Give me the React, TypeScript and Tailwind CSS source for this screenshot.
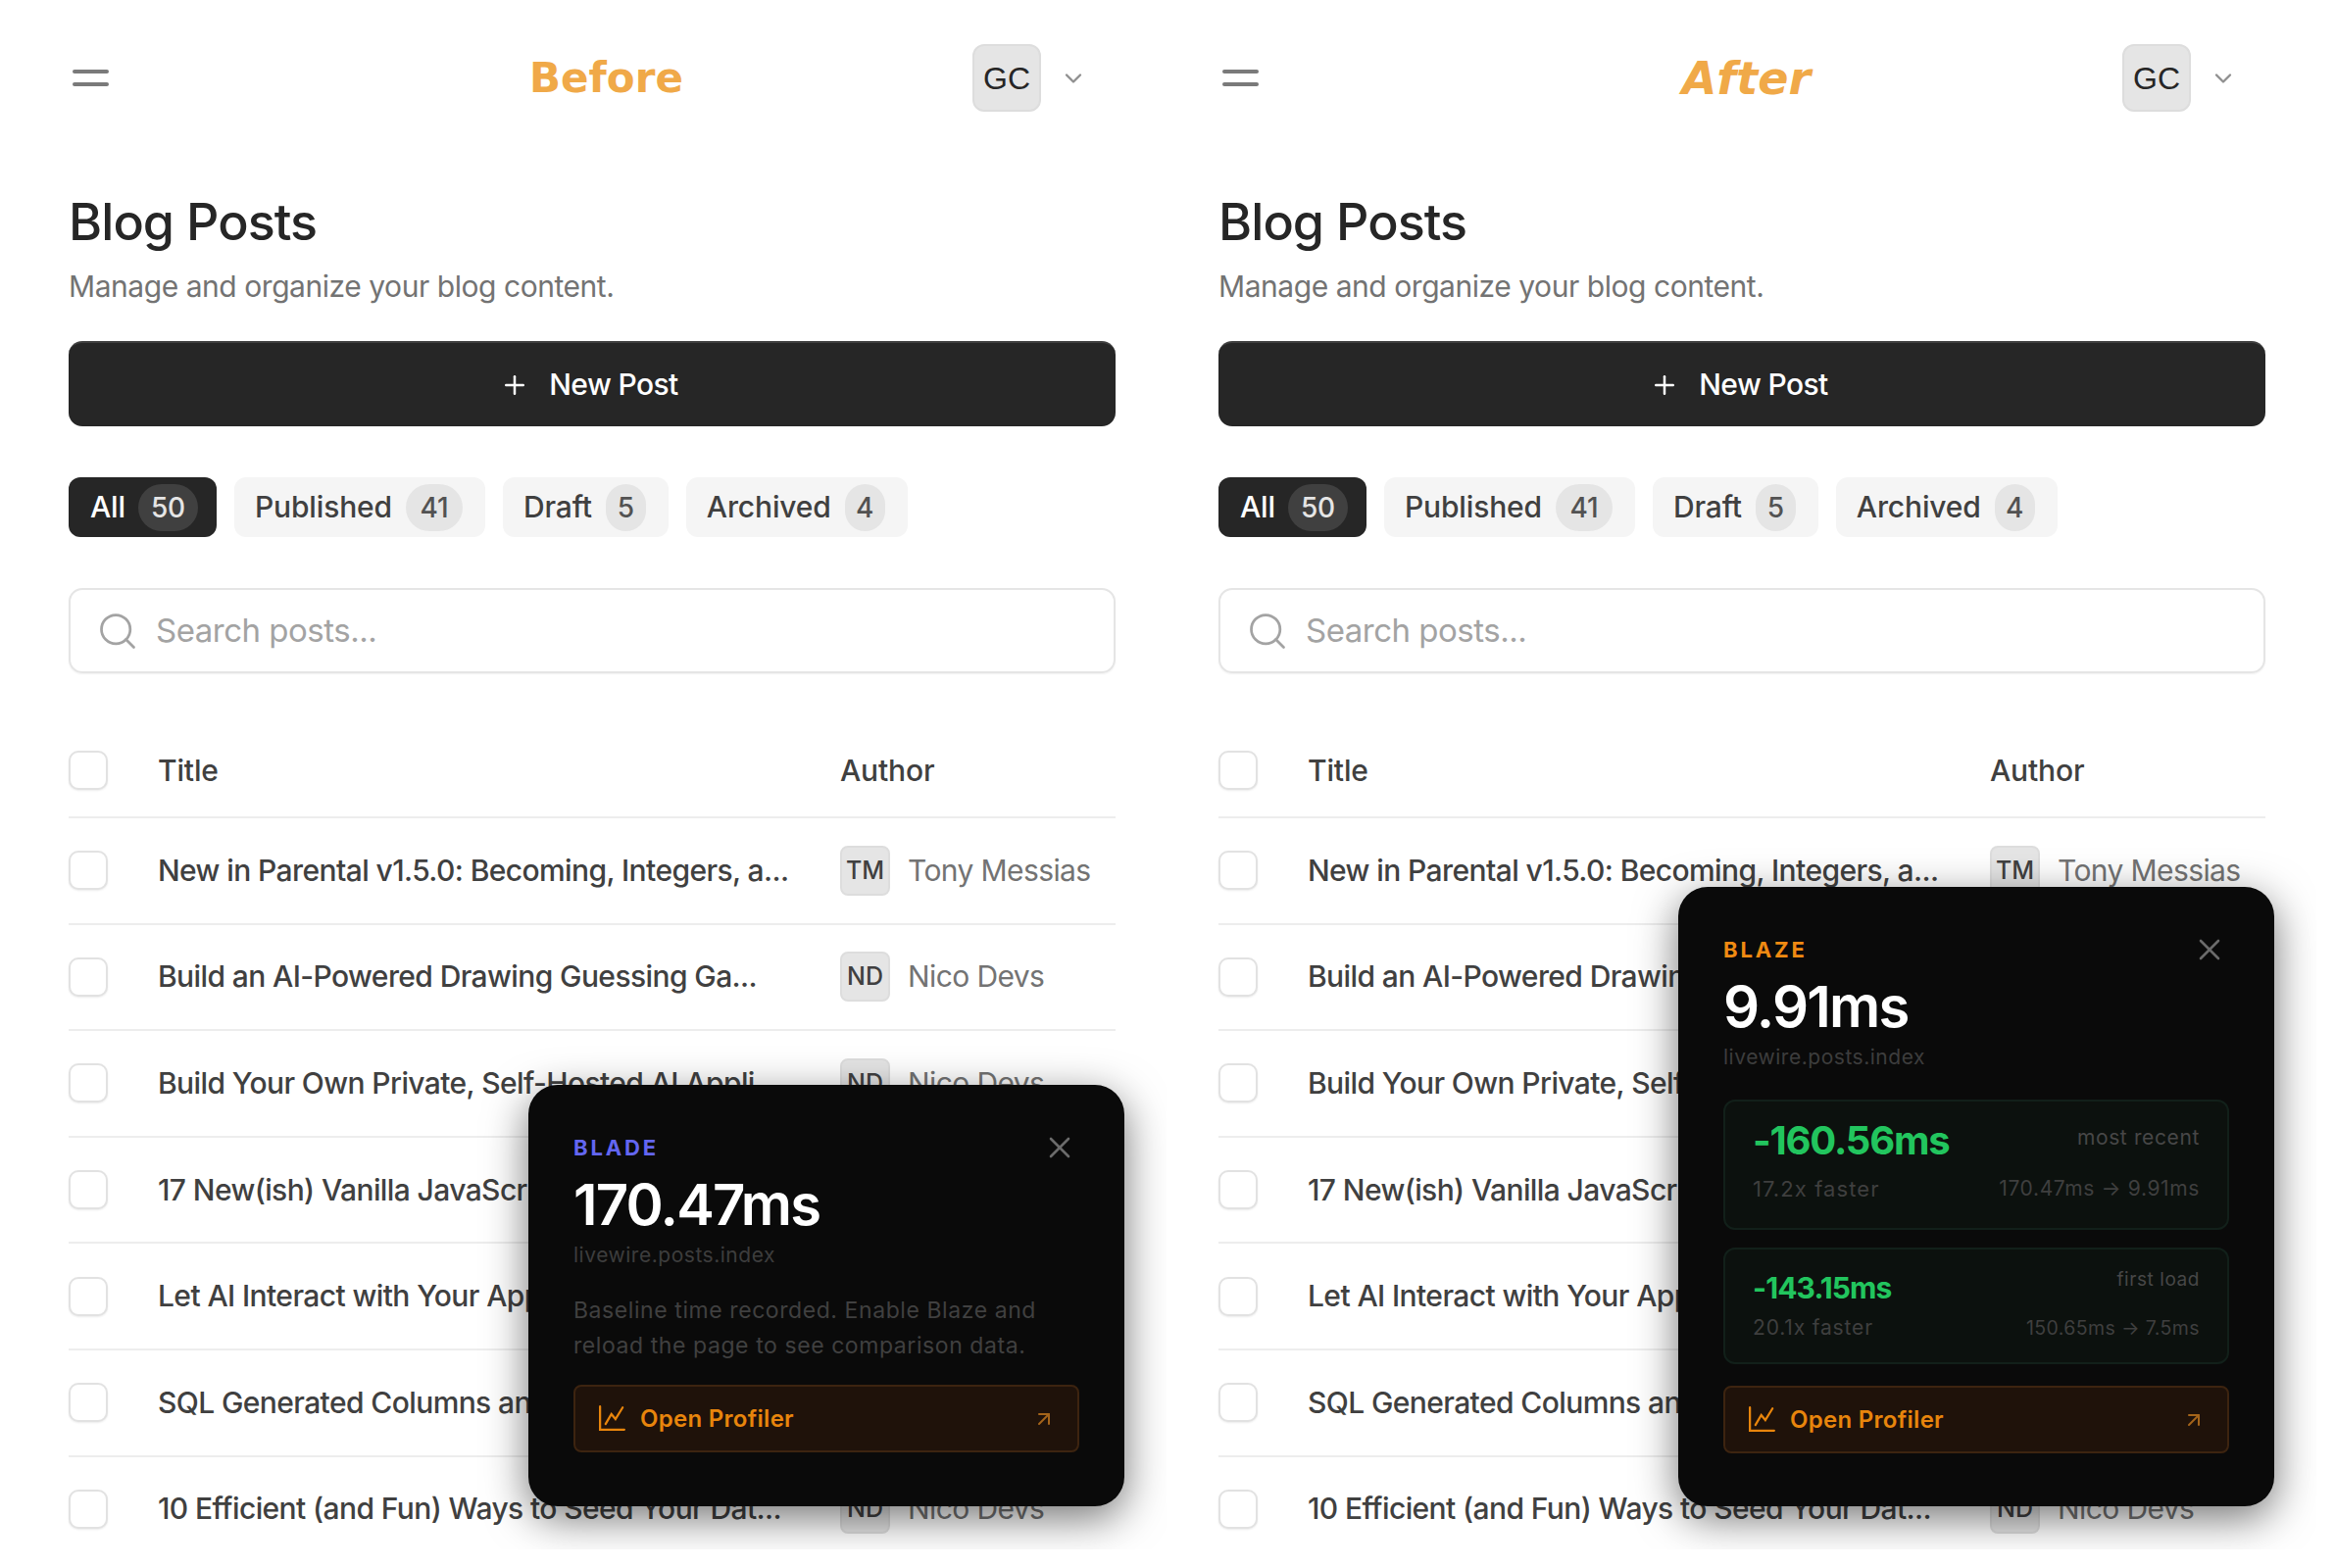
import { ChevronDown, Plus, Search, X, ArrowUpRight } from 'lucide-react';
import type { ReactNode } from 'react';

const rows = [
  { title: 'New in Parental v1.5.0: Becoming, Integers, a...', initials: 'TM', author: 'Tony Messias' },
  { title: 'Build an AI-Powered Drawing Guessing Ga...', initials: 'ND', author: 'Nico Devs' },
  { title: 'Build Your Own Private, Self-Hosted AI Appli...', initials: 'ND', author: 'Nico Devs' },
  { title: '17 New(ish) Vanilla JavaScript Features You...', initials: 'ND', author: 'Nico Devs' },
  { title: 'Let AI Interact with Your Apps Using Larav...', initials: 'ND', author: 'Nico Devs' },
  { title: 'SQL Generated Columns and How to Use T...', initials: 'ND', author: 'Nico Devs' },
  { title: '10 Efficient (and Fun) Ways to Seed Your Dat...', initials: 'ND', author: 'Nico Devs' },
];

const tabs = [
  { label: 'Published', count: '41', pill: 'w-[58px]' },
  { label: 'Draft', count: '5', pill: 'w-[41px]' },
  { label: 'Archived', count: '4', pill: 'w-[41px]' },
];

function Checkbox() {
  return <div className="w-10 h-10 shrink-0 rounded-[10px] border-2 border-[#e2e2e2] bg-white shadow-[0_1px_2px_rgba(0,0,0,0.08)]" />;
}

function ChartIcon() {
  return (
    <svg width="27" height="27" viewBox="0 0 24 24" fill="none" stroke="currentColor" strokeWidth="2" strokeLinecap="round" strokeLinejoin="miter">
      <path d="M1 1v21h22" />
      <path d="M6 17l5.3-9 3.7 4.5L21.5 2" />
    </svg>
  );
}

function ProfilerButton() {
  return (
    <div className="flex items-center h-[69px] rounded-lg border-2 border-[#3d2410] bg-[#1f120a] pl-[24px] pr-[22px] text-[#e8850c]">
      <ChartIcon />
      <span className="ml-[15px] text-[24px] font-semibold tracking-[0.012em]">Open Profiler</span>
      <ArrowUpRight size={24} strokeWidth={2} className="ml-auto text-[#a4641a]" />
    </div>
  );
}

function PopupHead({ name, nameClass, time }: { name: string; nameClass: string; time: string }) {
  return (
    <>
      <div className="flex items-center justify-between h-[24px]">
        <span className={`text-[22px] leading-none font-bold tracking-[0.13em] ${nameClass}`}>{name}</span>
        <X size={36} strokeWidth={1.75} className="text-[#6b6b6b] mr-[2px] shrink-0" />
      </div>
      <div className="mt-[14px] text-[58px] leading-[64px] font-semibold tracking-[-0.03em] text-white">{time}</div>
      <div className="mt-[6px] text-[21px] leading-[28px] text-[#3d3d3d] tracking-[0.025em]">livewire.posts.index</div>
    </>
  );
}

function Popup({ top, children }: { top: string; children: ReactNode }) {
  return (
    <div className={`absolute right-[-9px] bottom-[44px] w-[608px] ${top} rounded-[30px] bg-[#0a0a0a] px-[46px] pt-[52px] shadow-[0_12px_44px_rgba(0,0,0,0.55)] flex flex-col`}>
      {children}
    </div>
  );
}

function Compare({ big, bigClass, label, labelClass, faster, fasterClass, detail, detailClass, box, gap }: { big: string; bigClass: string; label: string; labelClass: string; faster: string; fasterClass: string; detail: string; detailClass: string; box: string; gap: string }) {
  return (
    <div className={`${box} rounded-xl border-2 border-[#12201a] bg-[#0c110e] px-[28px] flex flex-col`}>
      <div className="flex items-start justify-between">
        <span className={`${bigClass} font-bold tracking-[-0.03em] text-[#22c55e]`}>{big}</span>
        <span className={`${labelClass} text-[#474747] tracking-[0.03em]`}>{label}</span>
      </div>
      <div className={`${gap} flex items-center justify-between leading-[28px] text-[#3f3f3f]`}>
        <span className={fasterClass}>{faster}</span>
        <span className={detailClass}>{detail}</span>
      </div>
    </div>
  );
}

function Panel({ logo, logoClass, logoPad, frame, inset, children }: { logo: string; logoClass: string; logoPad: string; frame: string; inset: string; children: ReactNode }) {
  return (
    <div className={`relative shrink-0 h-[1581px] overflow-hidden ${frame}`}>
      <div className={`relative w-[1068px] h-[1581px] ${inset} pt-[45px]`}>
        <div className="flex items-center h-[69px]">
          <div className="w-[41px] pl-[4px] flex flex-col gap-[9px]">
            <div className="w-[37px] h-[4px] rounded-full bg-[#7a7a7a]" />
            <div className="w-[37px] h-[4px] rounded-full bg-[#7a7a7a]" />
          </div>
          <div className={`flex-1 flex justify-center ${logoPad}`}>
            <span className={`leading-none text-[#f0a948] font-bold ${logoClass}`} style={{ fontFamily: '"DejaVu Sans", sans-serif' }}>{logo}</span>
          </div>
          <div className="w-[70px] h-[69px] rounded-xl bg-[#e5e5e5] border-2 border-[#dddddd] flex items-center justify-center text-[32px] text-[#262626]" style={{ fontFamily: '"Liberation Sans", sans-serif' }}>GC</div>
          <ChevronDown size={28} strokeWidth={2} className="ml-[19px] mr-[29px] text-[#8f8f8f]" />
        </div>

        <h1 className="mt-[83px] text-[52px] leading-[60px] font-medium tracking-[-0.018em] text-[#262626]">Blog Posts</h1>
        <p className="mt-[15px] text-[30px] leading-[40px] tracking-[-0.015em] text-[#737373]">Manage and organize your blog content.</p>

        <div className="mt-[36px] h-[87px] rounded-[14px] bg-[#262626] border-t-2 border-[#3f3f3f] flex items-center justify-center gap-[20px] pr-[6px] text-white">
          <Plus size={30} strokeWidth={2} />
          <span className="text-[30px] font-medium tracking-[-0.02em]">New Post</span>
        </div>

        <div className="mt-[52px] flex gap-[18px] h-[61px]">
          <div className="flex items-center rounded-xl bg-[#262626] pl-[22px] pr-[19px] gap-[13px] text-white text-[30px] font-medium tracking-[-0.005em]">
            All
            <span className="w-[61px] h-[48px] rounded-full bg-[#404040] flex items-center justify-center text-[28px] text-[#e5e5e5]">50</span>
          </div>
          {tabs.map((t) => (
            <div key={t.label} className="flex items-center rounded-xl bg-[#f5f5f5] pl-[21px] pr-[23px] gap-[14px] text-[#404040] text-[30px] font-medium tracking-[-0.005em]">
              {t.label}
              <span className={`${t.pill} h-[48px] rounded-full bg-[#e5e5e5] flex items-center justify-center text-[28px] text-[#525252]`}>{t.count}</span>
            </div>
          ))}
        </div>

        <div className="mt-[52px] h-[87px] rounded-[14px] border-2 border-[#e5e5e5] shadow-[0_1px_2px_rgba(0,0,0,0.06)] flex items-center pl-[26px] gap-[17px] text-[#a3a3a3]">
          <Search size={44} strokeWidth={1.5} />
          <span className="text-[33px] tracking-[-0.015em]">Search posts...</span>
        </div>

        <div className="mt-[52px] h-[96px] flex items-center border-b-2 border-[#ededed] text-[30px] font-medium tracking-[-0.005em] text-[#404040]">
          <Checkbox />
          <span className="ml-[51px] w-[696px]">Title</span>
          <span>Author</span>
        </div>
        {rows.map((r) => (
          <div key={r.title} className="h-[108.6px] flex items-center border-b-2 border-[#ededed]">
            <Checkbox />
            <span className="ml-[51px] w-[696px] text-[30px] font-medium tracking-[-0.02em] text-[#404040] whitespace-nowrap">{r.title}</span>
            <span className="w-[51px] h-[51px] rounded-lg bg-[#e5e5e5] border-2 border-[#dddddd] flex items-center justify-center text-[25px] font-medium text-[#404040]">{r.initials}</span>
            <span className="ml-[18px] text-[30px] tracking-[-0.02em] text-[#737373]">{r.author}</span>
          </div>
        ))}

        {children}
      </div>
    </div>
  );
}

export default function App() {
  return (
    <div className="w-[2382px] h-[1600px] bg-white flex overflow-hidden" style={{ fontFamily: 'Inter, sans-serif' }}>
      <Panel logo="Before" logoClass="text-[42px]" logoPad="pl-[134px]" frame="w-[1190px]" inset="ml-[70px]">
        <Popup top="top-[1107px]">
          <PopupHead name="BLADE" nameClass="text-[#6366f1]" time="170.47ms" />
          <p className="mt-[24px] text-[23px] leading-[36px] tracking-[0.025em] text-[#404040]">
            Baseline time recorded. Enable Blaze and reload the page to see comparison data.
          </p>
          <div className="mt-[22px]"><ProfilerButton /></div>
        </Popup>
      </Panel>
      <Panel logo="After" logoClass="text-[46px] italic" logoPad="pl-[114px]" frame="w-[1173px]" inset="ml-[53px]">
        <Popup top="top-[905px]">
          <PopupHead name="BLAZE" nameClass="text-[#f08a12]" time="9.91ms" />
          <div className="mt-[29px] flex flex-col gap-[18px]">
            <Compare box="h-[133px] pt-[16px]" gap="mt-[11px]" big="-160.56ms" bigClass="text-[40px] leading-[48px]" label="most recent" labelClass="mt-[7px] text-[21px] leading-[28px]" faster="17.2x faster" fasterClass="text-[22px] tracking-[0.05em]" detail="170.47ms → 9.91ms" detailClass="text-[21px] tracking-[0.03em]" />
            <Compare box="h-[119px] pt-[20px]" gap="mt-[8px]" big="-143.15ms" bigClass="text-[30px] leading-[38px]" label="first load" labelClass="-mt-[1px] text-[19px] leading-[24px]" faster="20.1x faster" fasterClass="text-[21px] tracking-[0.04em]" detail="150.65ms → 7.5ms" detailClass="text-[19.5px] tracking-[0.02em]" />
          </div>
          <div className="mt-[22px]"><ProfilerButton /></div>
        </Popup>
      </Panel>
    </div>
  );
}
